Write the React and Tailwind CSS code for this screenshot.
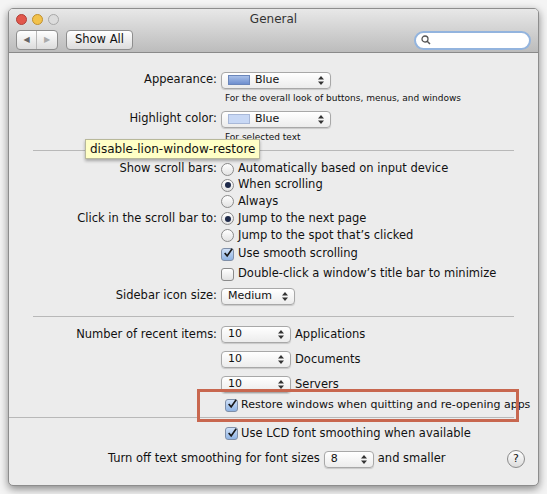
const F = { fontFamily: '"DejaVu Sans", "Liberation Sans", sans-serif' };

const Arrows = () => (
  <svg width="6" height="9" viewBox="0 0 6 9" className="shrink-0"><path d="M0 3.5 L3 0 L6 3.5Z M0 5.5 L3 9 L6 5.5Z" fill="#333" /></svg>
);

const Pop = ({ w, children }) => (
  <div className={`flex items-center h-[17px] ${w} rounded-[4px] border border-[#a8a8a8] bg-gradient-to-b from-white to-[#ececec] shadow-[0_1px_1px_rgba(0,0,0,0.15)] pl-[6px] pr-[6px] text-[11px]`}>
    <div className="flex-1 flex items-center gap-[5px]">{children}</div>
    <Arrows />
  </div>
);

const Radio = ({ on }) => (
  <div className="w-[13px] h-[13px] rounded-full border border-[#8a8a8a] bg-gradient-to-b from-white to-[#e2e2e2] flex items-center justify-center shrink-0">
    {on && <div className="w-[6px] h-[6px] rounded-full bg-[#1e2a4a]" />}
  </div>
);

const Check = ({ on }) => (
  <div className={`w-[13px] h-[13px] rounded-[3px] border flex items-center justify-center shrink-0 ${on ? 'border-[#7f8fa8] bg-gradient-to-b from-[#cfe0f7] to-[#8fb3e3]' : 'bg-gradient-to-b from-white to-[#e2e2e2] border-[#8a8a8a]'}`}>
    {on && (
      <svg width="12" height="12" viewBox="0 0 12 12" className="-mt-[2px] ml-[1px]">
        <path d="M2 6 L5 9.5 L11 1" stroke="#1a1a1a" strokeWidth="2" fill="none" />
      </svg>
    )}
  </div>
);

const Row = ({ label, h = 'h-[17px]', children }) => (
  <div className={`flex items-center ${h}`}>
    <div className="w-[212px] text-right pr-[4px] text-[11.5px] whitespace-nowrap">{label}</div>
    <div className="flex items-center gap-[4px] text-[11.5px] whitespace-nowrap">{children}</div>
  </div>
);

export default function App() {
  return (
    <div className="w-[547px] h-[494px] bg-[#f4f4f4] pt-[8px] px-[8px] text-[#111]" style={F}>
      <div className="relative w-[531px] h-[478px] rounded-[5px] overflow-hidden border border-[#8d8d8d] shadow-[0_3px_8px_rgba(0,0,0,0.45)] bg-[#ececec] flex flex-col">
        <div className="h-[44px] bg-gradient-to-b from-[#e8e8e8] to-[#bcbcbc] border-b border-[#8a8a8a] px-[7px] pt-[4px]">
          <div className="flex items-center h-[12px] relative">
            <div className="flex gap-[5px]">
              <div className="w-[11px] h-[11px] rounded-full bg-[#e2574c] border border-[#b04038]" />
              <div className="w-[11px] h-[11px] rounded-full bg-[#f2c24c] border border-[#c09030]" />
              <div className="w-[11px] h-[11px] rounded-full bg-[#dcdcdc] border border-[#a8a8a8]" />
            </div>
            <div className="absolute inset-x-0 text-center text-[12px] text-[#333]">General</div>
          </div>
          <div className="flex items-center mt-[5px] gap-[8px]">
            <div className="flex h-[20px] rounded-[4px] border border-[#8e8e8e] bg-gradient-to-b from-white to-[#dcdcdc] text-[8px] text-[#666]">
              <span className="w-[20px] flex items-center justify-center border-r border-[#b8b8b8]">◀</span>
              <span className="w-[20px] flex items-center justify-center text-[#aaa]">▶</span>
            </div>
            <div className="h-[20px] px-[8px] rounded-[4px] border border-[#8e8e8e] bg-gradient-to-b from-white to-[#dcdcdc] flex items-center text-[11.5px]">Show All</div>
            <div className="ml-auto w-[117px] h-[19px] rounded-full border-2 border-[#93b4de] bg-white flex items-center pl-[5px]">
              <svg width="10" height="10" viewBox="0 0 10 10"><circle cx="4" cy="4" r="3" stroke="#555" strokeWidth="1.3" fill="none" /><path d="M6.2 6.2 L9 9" stroke="#555" strokeWidth="1.5" /></svg>
            </div>
          </div>
        </div>

        <div className="pt-[17px] relative">
          <Row label="Appearance:" h="h-[20px]"><Pop w="w-[110px]"><span className="w-[22px] h-[10px] bg-gradient-to-b from-[#a9c0e8] to-[#6f8fcf] border border-[#6a86bb]" />Blue</Pop></Row>
          <div className="pl-[216px] text-[9px] h-[18px] flex items-center">For the overall look of buttons, menus, and windows</div>
          <Row label="Highlight color:" h="h-[22px]"><Pop w="w-[110px]"><span className="w-[22px] h-[10px] bg-[#c8d8f5] border border-[#a8b8d8]" />Blue</Pop></Row>
          <div className="pl-[216px] text-[9px] h-[16px] flex items-center">For selected text</div>
          <div className="mx-[24px] mt-[4px] border-t border-[#b8b8b8]" />
          <div className="absolute left-[76px] top-[86px] h-[20px] px-[4px] bg-[#ffffc6] border border-[#b8b89a] shadow-[0_2px_3px_rgba(0,0,0,0.3)] text-[12px] flex items-center">disable-lion-window-restore</div>

          <div className="mt-[10px]" />
          <Row label="Show scroll bars:" h="h-[16px]"><Radio />Automatically based on input device</Row>
          <Row label="" h="h-[16px]"><Radio on />When scrolling</Row>
          <Row label="" h="h-[17px]"><Radio />Always</Row>
          <Row label="Click in the scroll bar to:" h="h-[17px]"><Radio on />Jump to the next page</Row>
          <Row label="" h="h-[17px]"><Radio />Jump to the spot that’s clicked</Row>
          <Row label="" h="h-[20px]"><Check on />Use smooth scrolling</Row>
          <Row label="" h="h-[20px]"><Check />Double-click a window’s title bar to minimize</Row>
          <Row label="Sidebar icon size:" h="h-[24px]"><Pop w="w-[74px]">Medium</Pop></Row>
          <div className="mx-[24px] mt-[8px] border-t border-[#b8b8b8]" />

          <div className="mt-[9px]" />
          <Row label="Number of recent items:" h="h-[17px]"><Pop w="w-[70px]">10</Pop>Applications</Row>
          <div className="h-[8px]" />
          <Row label="" h="h-[17px]"><Pop w="w-[70px]">10</Pop>Documents</Row>
          <div className="h-[8px]" />
          <Row label="" h="h-[17px]"><Pop w="w-[70px]">10</Pop>Servers</Row>
          <div className="h-[24px] flex items-center">
            <div className="pl-[216px] flex items-center gap-[3px] text-[11px] whitespace-nowrap"><Check on />Restore windows when quitting and re-opening apps</div>
          </div>
          <div className="border-t border-[#b8b8b8] mr-[24px]" />
          <div className="absolute left-[188px] top-[336px] w-[322px] h-[33px] border-[3px] border-[#c8674f]" />
          <div className="h-[15px] mt-[8px] pl-[216px] flex items-center gap-[3px] text-[11.5px]"><Check on />Use LCD font smoothing when available</div>
          <div className="flex items-center h-[20px] mt-[8px] text-[11.5px] gap-[4px] pl-[99px] pr-[13px] whitespace-nowrap">
            Turn off text smoothing for font sizes<Pop w="w-[50px]">8</Pop>and smaller
            <div className="ml-auto w-[18px] h-[18px] rounded-full border border-[#8a8a8a] bg-gradient-to-b from-white to-[#dcdcdc] flex items-center justify-center text-[11px]">?</div>
          </div>
        </div>
      </div>
    </div>
  );
}
